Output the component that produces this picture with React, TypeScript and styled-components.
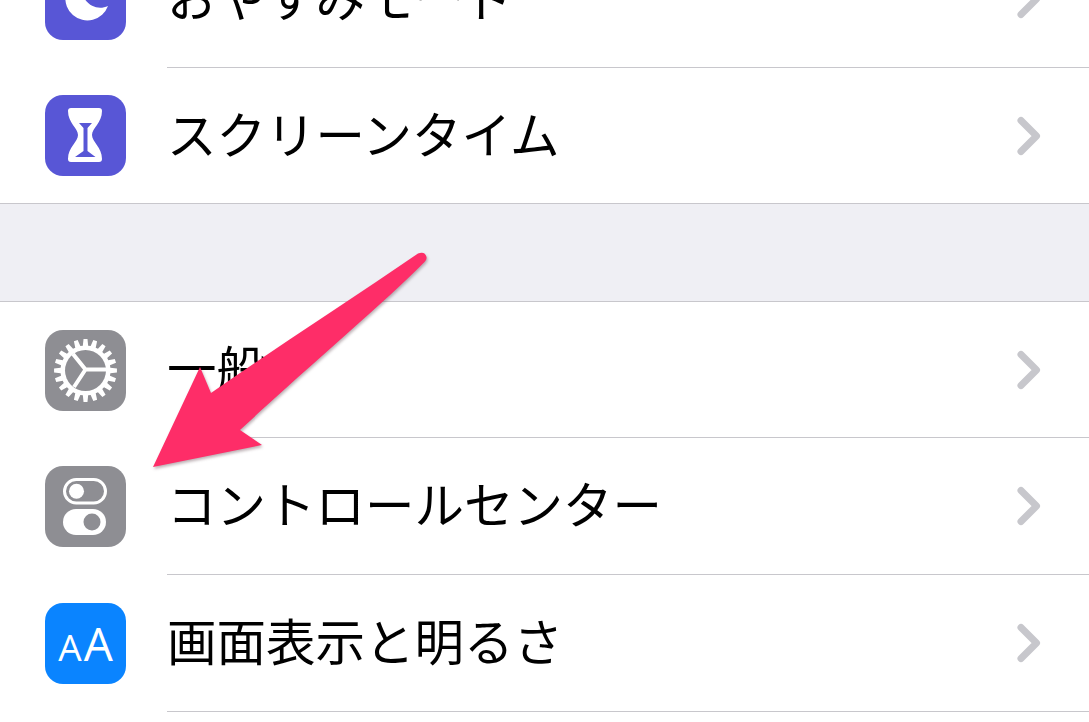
import React, { FC, ReactNode } from 'react';
import styled, { createGlobalStyle } from 'styled-components';

const GlobalStyle = createGlobalStyle`
  html, body {
    margin: 0;
    padding: 0;
    background: #fff;
    overflow: hidden;
  }
  * {
    box-sizing: border-box;
  }
`;

const gearTeeth = (cx: number, cy: number, count: number, outer: number, inner: number) => {
  const points: string[] = [];
  for (let i = 0; i < count; i++) {
    const step = (Math.PI * 2) / count;
    const a = i * step;
    const offsets: [number, number][] = [
      [-0.34, inner],
      [-0.2, outer],
      [0.2, outer],
      [0.34, inner]
    ];
    offsets.forEach(([o, r]) => {
      const x = cx + Math.cos(a + o * step) * r;
      const y = cy + Math.sin(a + o * step) * r;
      points.push(`${x.toFixed(2)},${y.toFixed(2)}`);
    });
  }
  return points.join(' ');
};

const MoonIcon = () => (
  <svg width={81} height={81} viewBox="0 0 81 81">
    <path d="M32 20 A22 22 0 1 0 63 47 C52 52 40 46 36 32 Z" fill="#fff" />
  </svg>
);

const HourglassIcon = () => (
  <svg width={81} height={81} viewBox="0 0 81 81">
    <path
      d="M26 13 H54 Q57 13 57 16 C57 28 47 33 47 40 C47 47 57 52 57 64 Q57 67 54 67 H26 Q23 67 23 64 C23 52 33 47 33 40 C33 33 23 28 23 16 Q23 13 26 13 Z"
      fill="#fff"
    />
    <path d="M34 28 H47 L42.5 33 L42.5 56 L50.5 62 H30 L38.5 56 L38.5 33 Z" fill="#5856d6" />
  </svg>
);

const GearIcon = () => (
  <svg width={81} height={81} viewBox="0 0 81 81">
    <polygon points={gearTeeth(40.5, 40.5, 20, 31.5, 25)} fill="#fff" />
    <circle cx={40.5} cy={40.5} r={20.5} fill="#8e8e93" />
    <path d="M40.5 39.5 L62 39.5 M40.5 39.5 L28 24 M40.5 39.5 L29 57" stroke="#fff" strokeWidth={4} />
  </svg>
);

const ControlsIcon = () => (
  <svg width={81} height={81} viewBox="0 0 81 81">
    <rect x={19.5} y={13.5} width={41} height={23.5} rx={11.75} fill="none" stroke="#fff" strokeWidth={3} />
    <circle cx={31.5} cy={25.2} r={7.5} fill="#fff" />
    <rect x={18} y={43} width={43} height={26} rx={13} fill="#fff" />
    <circle cx={47} cy={56} r={8.5} fill="#8e8e93" />
  </svg>
);

const Chevron = () => (
  <ChevronSvg width={30} height={44} viewBox="0 0 30 44">
    <path d="M6 6.5 L21.5 22 L6 37.5" fill="none" stroke="#c7c7cc" strokeWidth={7} strokeLinecap="round" strokeLinejoin="round" />
  </ChevronSvg>
);

type RowProps = {
  color: string;
  icon: ReactNode;
  label: string;
  last?: boolean;
  compact?: boolean;
};

const SettingsRow: FC<RowProps> = ({ color, icon, label, last, compact }) => (
  <Row $last={last} $compact={compact}>
    <IconTile $color={color}>{icon}</IconTile>
    <RowBody $last={last}>
      <Label>{label}</Label>
      <Chevron />
    </RowBody>
  </Row>
);

export default function App() {
  return (
    <Screen>
      <GlobalStyle />
      <Group $cropped>
        <SettingsRow color="#5856d6" icon={<MoonIcon />} label="おやすみモード" />
        <SettingsRow color="#5856d6" icon={<HourglassIcon />} label="スクリーンタイム" last compact />
      </Group>
      <Spacer />
      <Group>
        <SettingsRow color="#8e8e93" icon={<GearIcon />} label="一般" compact />
        <SettingsRow color="#8e8e93" icon={<ControlsIcon />} label="コントロールセンター" />
        <SettingsRow
          color="#0a84ff"
          icon={
            <FontSizeGlyph>
              <SmallA>A</SmallA>
              <LargeA>A</LargeA>
            </FontSizeGlyph>
          }
          label="画面表示と明るさ"
        />
      </Group>
      <Arrow viewBox="0 0 1089 722" width={1089} height={722}>
        <path
          d="M418 253.5 Q425 251 426.5 257 Q427 260 423 263.5 C385 302 310 365 240 430 L262 445 L153 467 L200 367 L211 393 C280 345 350 300 418 253.5 Z"
          fill="#fe2d68"
        />
      </Arrow>
    </Screen>
  );
}

const Screen = styled.div`
  position: relative;
  width: 1089px;
  height: 722px;
  overflow: hidden;
  background: #fff;
  font-family: "Noto Sans CJK JP", "Liberation Sans", sans-serif;
`;

const Group = styled.section<{ $cropped?: boolean }>`
  display: flex;
  flex-direction: column;
  margin-top: ${({ $cropped }) => ($cropped ? '-69px' : '0')};
  background: #fff;
`;

const Spacer = styled.div`
  height: 98px;
  background: #efeff4;
  border-bottom: 1px solid #c8c7cc;
`;

const Row = styled.div<{ $last?: boolean; $compact?: boolean }>`
  display: flex;
  align-items: stretch;
  height: ${({ $compact }) => ($compact ? '136px' : '137px')};
  padding-left: 45px;
  border-bottom: ${({ $last }) => ($last ? '1px solid #c8c7cc' : '0')};
`;

const IconTile = styled.div<{ $color: string }>`
  flex: none;
  align-self: center;
  width: 81px;
  height: 81px;
  border-radius: 18px;
  background: ${({ $color }) => $color};
  display: flex;
  align-items: center;
  justify-content: center;
  overflow: hidden;
`;

const RowBody = styled.div<{ $last?: boolean }>`
  flex: 1;
  display: flex;
  align-items: center;
  justify-content: space-between;
  margin-left: 41px;
  padding-right: 44px;
  border-bottom: ${({ $last }) => ($last ? '0' : '1px solid #c8c7cc')};
`;

const Label = styled.span`
  font-size: 49.5px;
  line-height: 60px;
  margin-top: -6px;
  color: #000;
  font-weight: 400;
`;

const ChevronSvg = styled.svg`
  flex: none;
`;

const FontSizeGlyph = styled.div`
  display: flex;
  align-items: baseline;
  gap: 2px;
  margin-top: -2px;
  color: #fff;
  font-family: "Open Sans", "Liberation Sans", sans-serif;
  font-weight: 500;
  line-height: 1;
`;

const SmallA = styled.span`
  font-size: 37px;
`;

const LargeA = styled.span`
  font-size: 46px;
`;

const Arrow = styled.svg`
  position: absolute;
  top: 0;
  left: 0;
  filter: drop-shadow(1px 2px 1.5px rgba(90, 60, 70, 0.4));
`;
